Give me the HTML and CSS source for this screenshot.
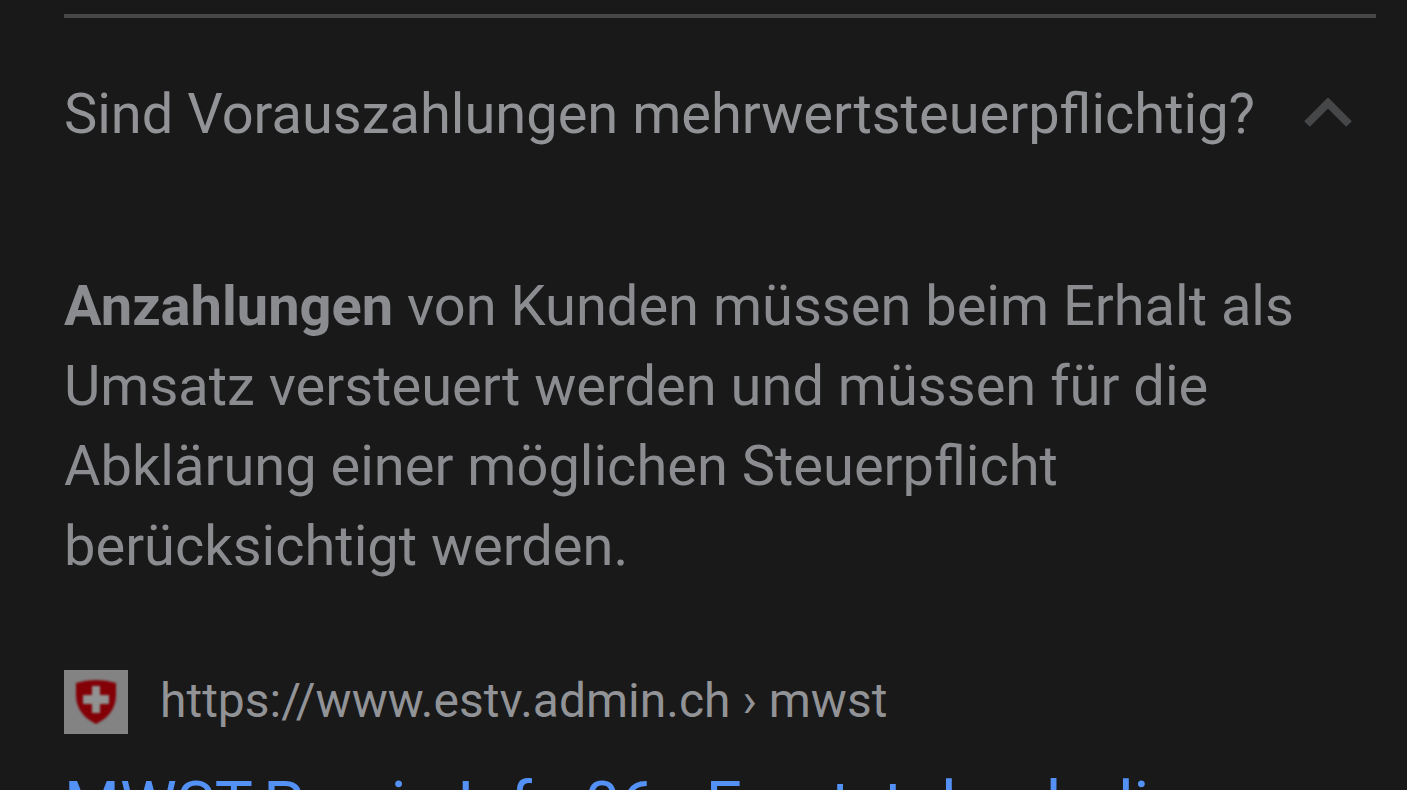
FILE: index.html
```
<!DOCTYPE html>
<html lang="de">
<head>
    <meta charset="UTF-8">
    <meta name="viewport" content="width=device-width, initial-scale=1.0">
    <title>Sind Vorauszahlungen mehrwertsteuerpflichtig?</title>
    <link rel="stylesheet" href="styles.css">
</head>
<body>
    <main class="results">
        <section class="question">
            <button class="question-toggle" type="button" aria-expanded="true" aria-controls="answer">
                <span>Sind Vorauszahlungen mehrwertsteuerpflichtig?</span>
                <svg class="chevron" viewBox="0 0 48 32" aria-hidden="true">
                    <path d="M3 26 L24 5 L45 26" fill="none" stroke="currentColor" stroke-width="8"/>
                </svg>
            </button>
            <div class="answer" id="answer">
                <p class="answer-text"><b>Anzahlungen</b> von Kunden müssen beim Erhalt als Umsatz versteuert werden und müssen für die Abklärung einer möglichen Steuerpflicht berücksichtigt werden.</p>
                <div class="source">
                    <svg class="favicon" viewBox="0 0 64 64" aria-hidden="true">
                        <rect width="64" height="64" fill="#838383"/>
                        <path class="shield" d="M12 13 Q32 7 52 13 V25 C52 39 44 48 32 54 C20 48 12 39 12 25 Z"/>
                        <path class="cross" d="M28 16 H36 V25 H45 V34 H36 V43 H28 V34 H19 V25 H28 Z"/>
                    </svg>
                    <cite>https://www.estv.admin.ch › mwst</cite>
                </div>
                <a class="result-link" href="#">MWST-Praxis-Info 06 - Ersetzt durch die</a>
            </div>
        </section>
    </main>
</body>
</html>
```
FILE: styles.css
```
* {
    box-sizing: border-box;
}
body {
    margin: 0;
    height: 100vh;
    overflow: hidden;
    background-color: #191919;
    color: #8a8c90;
    font-family: Roboto, sans-serif;
    font-size: 56px;
    line-height: 80px;
}
.results {
    padding: 14px 31px 0 64px;
}
.question {
    border-top: 4px solid #464749;
}
.question-toggle {
    display: flex;
    justify-content: space-between;
    align-items: center;
    width: 100%;
    padding: 56px 24px 56px 0;
    border: none;
    background: none;
    color: #919396;
    font: inherit;
    text-align: left;
    cursor: pointer;
}
.chevron {
    flex: none;
    width: 48px;
    height: 32px;
    color: #464749;
}
.answer {
    padding-top: 56px;
}
.answer-text {
    margin: 0;
}
.answer-text b {
    font-weight: 700;
}

/* Source line with site icon */
.source {
    display: flex;
    align-items: flex-start;
    gap: 32px;
    margin-top: 84px;
    color: #919396;
    font-size: 48px;
    line-height: 62px;
}
.source cite {
    font-style: normal;
}
.favicon {
    flex: none;
    width: 64px;
    height: 64px;
}
.shield {
    fill: #820006;
    filter: blur(1px);
}
.cross {
    fill: #929292;
    filter: blur(1px);
}
.result-link {
    display: block;
    margin-top: 28px;
    color: #5491f5;
    font-size: 64px;
    line-height: 88px;
    text-decoration: none;
}
```
